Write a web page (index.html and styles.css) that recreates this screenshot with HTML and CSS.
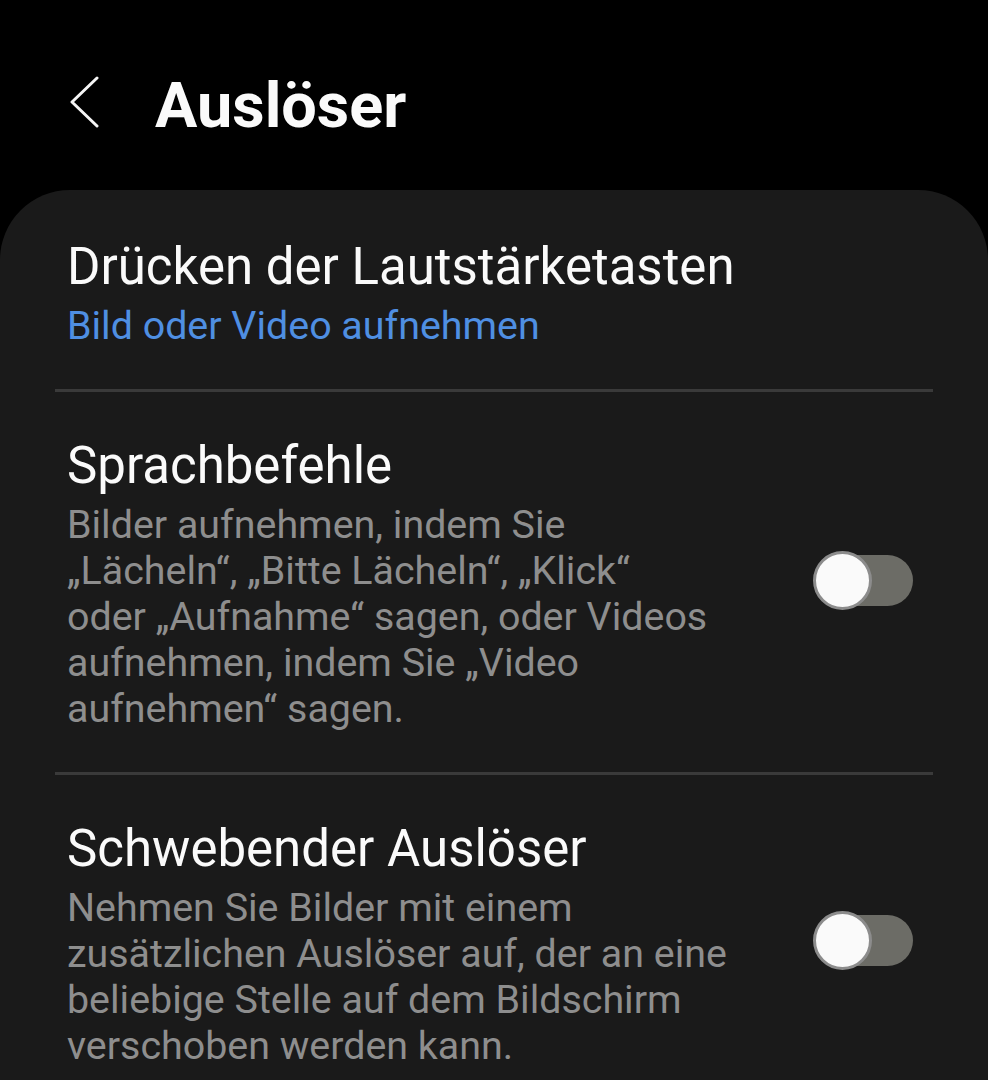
FILE: index.html
```html
<!DOCTYPE html>
<html lang="de">
<head>
<meta charset="utf-8">
<title>Auslöser</title>
<link rel="stylesheet" href="styles.css">
</head>
<body>
<header class="appbar">
  <svg class="back" width="30" height="52" viewBox="0 0 30 52" aria-hidden="true">
    <polyline points="27,2 2,26 27,50" fill="none" stroke="#f5f5f5" stroke-width="3" stroke-linecap="round" stroke-linejoin="round"/>
  </svg>
  <h1 class="page-title">Auslöser</h1>
</header>
<main class="card">
  <section class="row row-first">
    <div class="row-text">
      <div class="row-title">Drücken der Lautstärketasten</div>
      <div class="row-value">Bild oder Video aufnehmen</div>
    </div>
  </section>
  <hr class="divider">
  <section class="row">
    <div class="row-text">
      <div class="row-title">Sprachbefehle</div>
      <div class="row-desc">Bilder aufnehmen, indem Sie<br>„Lächeln“, „Bitte Lächeln“, „Klick“<br>oder „Aufnahme“ sagen, oder Videos<br>aufnehmen, indem Sie „Video<br>aufnehmen“ sagen.</div>
    </div>
    <div class="switch"><span class="track"></span><span class="knob"></span></div>
  </section>
  <hr class="divider">
  <section class="row">
    <div class="row-text">
      <div class="row-title">Schwebender Auslöser</div>
      <div class="row-desc">Nehmen Sie Bilder mit einem<br>zusätzlichen Auslöser auf, der an eine<br>beliebige Stelle auf dem Bildschirm<br>verschoben werden kann.</div>
    </div>
    <div class="switch"><span class="track"></span><span class="knob"></span></div>
  </section>
</main>
</body>
</html>
```
FILE: styles.css
```css
html, body {
  margin: 0;
  padding: 0;
  background: #000;
  font-family: Roboto, "Noto Sans", "Liberation Sans", sans-serif;
  color: #fafafa;
}

.appbar {
  display: flex;
  align-items: flex-start;
  height: 190px;
  box-sizing: border-box;
  padding: 74px 0 0 70px;
  gap: 55px;
}

.back {
  display: block;
  margin-top: 2px;
  flex: none;
}

.page-title {
  margin: 0;
  font-size: 63px;
  line-height: 63px;
  font-weight: 700;
  color: #fafafa;
}

.card {
  background: #1a1a1a;
  border-radius: 70px 70px 0 0;
  min-height: 890px;
  overflow: hidden;
}

.row {
  display: flex;
  align-items: center;
  justify-content: space-between;
  padding: 46px 75px 40px 67px;
}

.row-first {
  padding-top: 49px;
}

.row-text {
  display: flex;
  flex-direction: column;
  gap: 8px;
}

.row-title {
  font-size: 51px;
  line-height: 56px;
  color: #fafafa;
}

.row-value {
  font-size: 39.4px;
  line-height: 46px;
  color: #4f8fe2;
}

.row-desc {
  font-size: 39.4px;
  line-height: 46px;
  color: #8e8e8e;
}

.divider {
  margin: 0 55px;
  border: 0;
  height: 3px;
  background: #3a3a3a;
}

.switch {
  position: relative;
  flex: none;
  width: 100px;
  height: 59px;
  margin-bottom: 10px;
}

.track {
  position: absolute;
  left: 6px;
  right: 0;
  top: 4px;
  height: 51px;
  border-radius: 26px;
  background: #6c6c66;
}

.knob {
  position: absolute;
  left: 0;
  top: 0;
  width: 59px;
  height: 59px;
  box-sizing: border-box;
  border-radius: 50%;
  background: #fafafa;
  border: 3px solid #8c8c8c;
}
```
